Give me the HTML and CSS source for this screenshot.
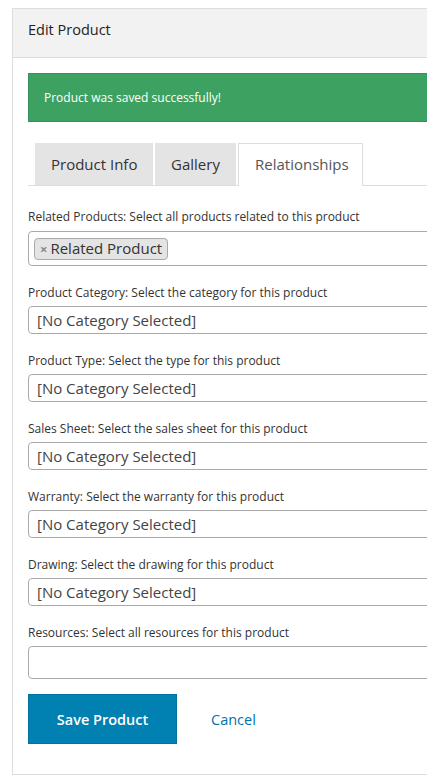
FILE: index.html
```html
<!DOCTYPE html>
<html>
<head>
<meta charset="utf-8">
<link rel="stylesheet" href="styles.css">
</head>
<body>
<div class="panel">
  <div class="panel-header">Edit Product</div>
  <div class="panel-body">
    <div class="alert">Product was saved successfully!</div>
    <div class="tabs">
      <div class="tab">Product Info</div>
      <div class="tab">Gallery</div>
      <div class="tab active">Relationships</div>
    </div>
    <div class="fields">
      <div class="field">
        <label class="label">Related Products: Select all products related to this product</label>
        <div class="multi">
          <span class="chip"><span class="chip-x">×</span>Related Product</span>
        </div>
      </div>
      <div class="field">
        <label class="label">Product Category: Select the category for this product</label>
        <div class="select">[No Category Selected]</div>
      </div>
      <div class="field">
        <label class="label">Product Type: Select the type for this product</label>
        <div class="select">[No Category Selected]</div>
      </div>
      <div class="field">
        <label class="label">Sales Sheet: Select the sales sheet for this product</label>
        <div class="select">[No Category Selected]</div>
      </div>
      <div class="field">
        <label class="label">Warranty: Select the warranty for this product</label>
        <div class="select">[No Category Selected]</div>
      </div>
      <div class="field">
        <label class="label">Drawing: Select the drawing for this product</label>
        <div class="select">[No Category Selected]</div>
      </div>
      <div class="field">
        <label class="label">Resources: Select all resources for this product</label>
        <div class="multi empty"></div>
      </div>
    </div>
    <div class="actions">
      <button class="btn-save">Save Product</button>
      <a class="cancel">Cancel</a>
    </div>
  </div>
</div>
</body>
</html>
```
FILE: styles.css
```css
html, body {
  margin: 0;
  padding: 0;
  overflow: hidden;
  background: #fff;
}
body {
  font-family: "Open Sans", "Noto Sans", sans-serif;
  color: #333;
}
.panel {
  margin: 8px 0 0 12px;
  width: 600px;
  border: 1px solid #ddd;
  box-sizing: border-box;
}
.panel-header {
  height: 48px;
  background: #f2f2f2;
  border-bottom: 1px solid #ddd;
  padding-left: 15px;
  font-size: 14.5px;
  line-height: 42px;
  color: #222;
}
.panel-body {
  padding: 15px 15px 30px 15px;
}
.alert {
  height: 47px;
  background: #3da261;
  border: 1px solid #35905a;
  color: #fff;
  font-size: 12px;
  line-height: 47px;
  padding-left: 15px;
}
.tabs {
  margin-top: 21px;
  display: flex;
  gap: 2px;
  padding-left: 7px;
  border-bottom: 1px solid #ddd;
  height: 42px;
}
.tab {
  height: 42px;
  box-sizing: border-box;
  background: #e4e4e4;
  font-size: 15px;
  line-height: 42px;
  color: #333;
  padding: 0 0 0 16px;
  white-space: nowrap;
  flex: none;
}
.tab:nth-child(1) { width: 118px; }
.tab:nth-child(2) { width: 81px; text-align: center; padding: 0; }
.tab.active {
  width: 125px;
  background: #fff;
  border: 1px solid #ddd;
  border-bottom: none;
  height: 43px;
  color: #555;
  padding: 0 0 0 16px;
  line-height: 40px;
}
.fields {
  margin-top: 22px;
}
.field {
  margin-bottom: 18px;
}
.label {
  display: block;
  font-size: 12px;
  line-height: 18px;
  margin-bottom: 5px;
  color: #333;
}
.multi {
  height: 35px;
  box-sizing: border-box;
  border: 1px solid #aaa;
  border-radius: 4px;
  padding: 5px 0 0 5px;
}
.multi.empty {
  height: 33px;
  margin-top: -1px;
}
.chip {
  display: inline-block;
  height: 22px;
  box-sizing: border-box;
  background: #e4e4e4;
  border: 1px solid #aaa;
  border-radius: 4px;
  font-size: 15px;
  line-height: 19px;
  padding: 0 5px 0 5px;
  color: #333;
}
.chip-x {
  color: #888;
  font-weight: 700;
  font-size: 13px;
  margin-right: 3px;
}
.select {
  height: 28px;
  box-sizing: border-box;
  border: 1px solid #aaa;
  border-radius: 4px;
  padding-left: 8px;
  font-size: 15px;
  line-height: 27px;
  color: #444;
}
.field + .field .select {
  margin-top: -1px;
}
.actions {
  display: flex;
  align-items: center;
  margin-top: -3px;
  gap: 34px;
}
.btn-save {
  width: 149px;
  height: 50px;
  background: #0081b1;
  border: 1px solid #0073a0;
  color: #fff;
  font-family: "Open Sans", "Noto Sans", sans-serif;
  font-size: 14.5px;
  font-weight: 600;
  padding: 0;
}
.cancel {
  color: #0073aa;
  font-size: 14.5px;
}
```
